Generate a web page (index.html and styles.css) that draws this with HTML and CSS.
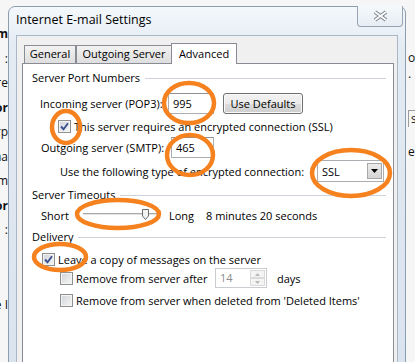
FILE: index.html
```html
<!DOCTYPE html>
<html lang="en">
<head>
    <meta charset="UTF-8">
    <meta name="viewport" content="width=device-width, initial-scale=1.0">
    <title>Internet E-mail Settings</title>
    <link rel="stylesheet" href="styles.css">
</head>
<body>
<div class="screen">
    <div class="behind behind-left">
        <div class="frag"><b>m</b></div>
        <div class="frag">:</div>
        <div class="frag">re</div>
        <div class="frag"><b>or</b></div>
        <div class="frag">rp</div>
        <div class="frag">ma</div>
        <div class="frag">m</div>
        <div class="frag"><b>or</b></div>
        <div class="frag">:</div>
        <div class="frag frag-low">e I</div>
    </div>

    <div class="dialog">
        <div class="titlebar">
            <span class="title">Internet E-mail Settings</span>
            <div class="close-btn">
                <svg width="17" height="12" viewBox="0 0 17 12">
                    <path d="M3 2 L14 10 M14 2 L3 10" stroke="#7b8592" stroke-width="4" fill="none"/>
                    <path d="M3 2 L14 10 M14 2 L3 10" stroke="#fdfdfd" stroke-width="1.8" fill="none"/>
                </svg>
            </div>
        </div>

        <div class="client">
            <div class="tabs">
                <div class="tab tab-general">General</div>
                <div class="tab tab-outgoing">Outgoing Server</div>
                <div class="tab tab-advanced active">Advanced</div>
            </div>

            <div class="panel">
                <div class="group-head">Server Port Numbers</div>

                <div class="row row-incoming">
                    <span class="lbl lbl-incoming">Incoming server (POP3):</span>
                    <div class="textbox tb-incoming">995</div>
                    <div class="btn">Use Defaults</div>
                </div>

                <div class="row row-ssl">
                    <span class="check">
                        <svg width="9" height="9" viewBox="0 0 9 9"><path d="M1 4.5 L3.5 7.2 L8 1.2" stroke="#3d5190" stroke-width="1.9" fill="none"/></svg>
                    </span>
                    <span>This server requires an encrypted connection (SSL)</span>
                </div>

                <div class="row row-outgoing">
                    <span class="lbl lbl-outgoing">Outgoing server (SMTP):</span>
                    <div class="textbox tb-outgoing">465</div>
                </div>

                <div class="row row-encrypt">
                    <span class="lbl lbl-encrypt">Use the following type of encrypted connection:</span>
                    <div class="select">
                        <span>SSL</span>
                        <span class="select-arrow">
                            <svg width="7" height="4" viewBox="0 0 7 4"><path d="M0 0 H7 L3.5 4 Z" fill="#000"/></svg>
                        </span>
                    </div>
                </div>

                <div class="group-head">Server Timeouts</div>

                <div class="row row-slider">
                    <span class="lbl lbl-short">Short</span>
                    <div class="slider">
                        <div class="slider-track"></div>
                        <svg class="slider-thumb" width="7" height="11" viewBox="0 0 7 11">
                            <path d="M0.5 0.5 H6.5 V7 L3.5 10.5 L0.5 7 Z" fill="#f3f3f3" stroke="#6d6d6d"/>
                        </svg>
                    </div>
                    <span class="lbl lbl-long">Long</span>
                    <span>8 minutes 20 seconds</span>
                </div>

                <div class="group-head">Delivery</div>

                <div class="row row-leave">
                    <span class="check">
                        <svg width="9" height="9" viewBox="0 0 9 9"><path d="M1 4.5 L3.5 7.2 L8 1.2" stroke="#3d5190" stroke-width="1.9" fill="none"/></svg>
                    </span>
                    <span>Leave a copy of messages on the server</span>
                </div>

                <div class="row row-remove-after">
                    <span class="check"></span>
                    <span class="lbl lbl-remove">Remove from server after</span>
                    <div class="spin">
                        <span>14</span>
                        <span class="spin-btns">
                            <span class="spin-btn">
                                <svg width="5" height="3" viewBox="0 0 5 3"><path d="M0 3 H5 L2.5 0 Z" fill="#b9b9b9"/></svg>
                            </span>
                            <span class="spin-btn">
                                <svg width="5" height="3" viewBox="0 0 5 3"><path d="M0 0 H5 L2.5 3 Z" fill="#b9b9b9"/></svg>
                            </span>
                        </span>
                    </div>
                    <span class="lbl-days">days</span>
                </div>

                <div class="row row-remove-deleted">
                    <span class="check"></span>
                    <span>Remove from server when deleted from 'Deleted Items'</span>
                </div>
            </div>
        </div>
    </div>

    <div class="behind behind-right">
        <div class="rfrag">o</div>
        <div class="rfrag">.</div>
        <div class="rfrag rfrag-box">s</div>
        <div class="rfrag rfrag-low">es</div>
    </div>

    <!-- orange annotation rings drawn over the screenshot -->
    <svg class="marks" width="415" height="362" viewBox="0 0 415 362">
        <g fill="none" stroke="#f5821f" stroke-width="4.5">
            <ellipse cx="189" cy="103" rx="25" ry="20"/>
            <ellipse cx="66" cy="127" rx="14" ry="16"/>
            <ellipse cx="190" cy="155" rx="23" ry="20"/>
            <ellipse cx="351" cy="173" rx="39" ry="23"/>
            <ellipse cx="118" cy="214" rx="41" ry="14"/>
            <ellipse cx="60" cy="257" rx="26" ry="13"/>
        </g>
    </svg>
</div>
</body>
</html>
```

FILE: styles.css
```css
body {
    margin: 0;
    font-family: "Open Sans", "Noto Sans", sans-serif;
    font-size: 11px;
    color: #000;
    background: #f6f6f6;
}

.screen {
    position: relative;
    display: flex;
    width: 415px;
    height: 362px;
    overflow: hidden;
    background: #f6f6f6;
}

/* bits of the window behind the dialog */
.behind {
    flex: none;
    overflow: hidden;
    font-size: 12px;
    color: #111;
}

.behind-left {
    width: 8px;
    padding-top: 22px;
}

.frag {
    display: flex;
    justify-content: flex-end;
    height: 24.5px;
    line-height: 24.5px;
    white-space: nowrap;
}

.frag-low {
    margin-top: 50px;
}

.behind-right {
    width: 9px;
    padding-top: 50px;
    padding-left: 2px;
}

.rfrag {
    height: 16px;
    line-height: 16px;
    white-space: nowrap;
}

.rfrag-box {
    margin-top: 28px;
    padding-left: 2px;
    border-top: 1px solid #9c9c9c;
    border-left: 1px solid #9c9c9c;
}

.rfrag-low {
    margin-top: 17px;
}

/* dialog frame */
.dialog {
    flex: none;
    box-sizing: border-box;
    width: 398px;
    height: 380px;
    margin-top: 6px;
    padding: 0 7px;
    border: 1px solid #8d9db0;
    border-radius: 7px 7px 0 0;
    background: linear-gradient(#f4f8fc, #e3ebf3 40px, #d9e3ee);
}

.titlebar {
    display: flex;
    justify-content: space-between;
    align-items: flex-start;
    height: 28px;
}

.title {
    margin-top: 5px;
    font-size: 12.5px;
    line-height: 16px;
    color: #000;
}

.close-btn {
    display: flex;
    align-items: center;
    justify-content: center;
    width: 44px;
    height: 20px;
    margin: -1px -5px 0 0;
    border: 1px solid #97a4b4;
    border-top: none;
    border-radius: 0 0 4px 4px;
    background: linear-gradient(#f6f9fb, #e6edf3);
}

.client {
    height: 340px;
    padding: 7px 3px 0 5px;
    border: 1px solid #a9b7c6;
    background: #f0f0f0;
}

/* tabs */
.tabs {
    position: relative;
    z-index: 1;
    display: flex;
    align-items: flex-end;
    height: 20px;
    margin-left: 2px;
}

.tab {
    box-sizing: border-box;
    height: 18px;
    line-height: 16px;
    text-align: center;
    white-space: nowrap;
    border: 1px solid #898c95;
    border-bottom: none;
    background: linear-gradient(#f3f3f3, #e8e8e8 50%, #dedede);
}

.tab-general {
    width: 52px;
}

.tab-outgoing {
    width: 96px;
}

.tab-advanced {
    width: 66px;
    margin-left: -1px;
}

.tab.active {
    height: 21px;
    margin-bottom: -1px;
    line-height: 19px;
    background: #fff;
}

.panel {
    height: 320px;
    padding: 6px 7px 0 9px;
    border: 1px solid #898c95;
    background: #fff;
}

/* group headings with the rule after them */
.group-head {
    display: flex;
    align-items: center;
    height: 16px;
    line-height: 16px;
    white-space: nowrap;
}

.group-head::after {
    content: "";
    flex: 1;
    margin-left: 5px;
    border-top: 1px solid #cdd3d9;
}

.group-head + .row {
    margin-top: 6px;
}

.row {
    display: flex;
    align-items: center;
    white-space: nowrap;
}

.lbl {
    flex: none;
}

.row-incoming {
    height: 22px;
    margin-left: 8px;
}

.lbl-incoming {
    width: 128px;
}

.textbox {
    box-sizing: border-box;
    height: 21px;
    padding-left: 4px;
    line-height: 19px;
    border: 1px solid #abadb3;
    border-top-color: #8e9095;
    background: #fff;
}

.tb-incoming {
    width: 46px;
}

.tb-outgoing {
    width: 43px;
}

.btn {
    box-sizing: border-box;
    width: 80px;
    height: 21px;
    margin-left: 9px;
    line-height: 19px;
    text-align: center;
    border: 1px solid #707070;
    border-radius: 3px;
    background: linear-gradient(#f2f2f2, #ebebeb 50%, #dddddd 50%, #cfcfcf);
    box-shadow: inset 0 0 0 1px #fafafa;
}

.check {
    flex: none;
    display: flex;
    align-items: center;
    justify-content: center;
    box-sizing: border-box;
    width: 13px;
    height: 13px;
    margin-right: 3px;
    border: 1px solid #8e8f8f;
    background: linear-gradient(135deg, #cfd3d8, #f7f7f7);
    box-shadow: inset 0 0 0 1px #f4f4f4;
}

.row-ssl {
    height: 16px;
    margin: 4px 0 0 26px;
}

.row-outgoing {
    height: 22px;
    margin: 2px 0 0 9px;
}

.lbl-outgoing {
    width: 130px;
}

.row-encrypt {
    height: 22px;
    margin: 2px 0 5px 28px;
}

.lbl-encrypt {
    width: 257px;
}

.select {
    box-sizing: border-box;
    display: flex;
    align-items: center;
    justify-content: space-between;
    width: 67px;
    height: 22px;
    padding: 0 1px 0 4px;
    border: 1px solid #abadb3;
    background: #fff;
}

.select-arrow {
    display: flex;
    align-items: center;
    justify-content: center;
    box-sizing: border-box;
    width: 15px;
    height: 16px;
    border: 1px solid #a7a7a7;
    background: linear-gradient(#ececec, #d4d4d4);
}

.row-slider {
    height: 18px;
    margin: 3px 0 5px 9px;
}

.group-head + .row-slider {
    margin-top: 3px;
}

.lbl-short {
    width: 42px;
}

.slider {
    position: relative;
    width: 74px;
    height: 18px;
}

.slider-track {
    margin-top: 7px;
    height: 1px;
    border-top: 1px solid #a9a9a9;
    border-bottom: 1px solid #fff;
    background: #e3e3e3;
}

.slider-thumb {
    position: absolute;
    left: 59px;
    top: 3px;
}

.lbl-long {
    width: 37px;
    margin-left: 12px;
}

.row-leave {
    height: 16px;
    margin-left: 10px;
}

.row-remove-after {
    height: 20px;
    margin: 1px 0 0 28px;
}

.lbl-remove {
    width: 139px;
}

.spin {
    box-sizing: border-box;
    display: flex;
    justify-content: space-between;
    width: 52px;
    height: 20px;
    padding: 0 1px 0 4px;
    line-height: 18px;
    color: #8c8c8c;
    border: 1px solid #c9ccd1;
    background: #fff;
}

.spin-btns {
    display: flex;
    flex-direction: column;
    justify-content: center;
}

.spin-btn {
    display: flex;
    align-items: center;
    justify-content: center;
    box-sizing: border-box;
    width: 15px;
    height: 8px;
    border: 1px solid #dadada;
    background: #f4f4f4;
}

.lbl-days {
    margin-left: 10px;
}

.row-remove-deleted {
    height: 16px;
    margin: 4px 0 0 28px;
}

.marks {
    position: absolute;
    left: 0;
    top: 0;
    pointer-events: none;
}
```
